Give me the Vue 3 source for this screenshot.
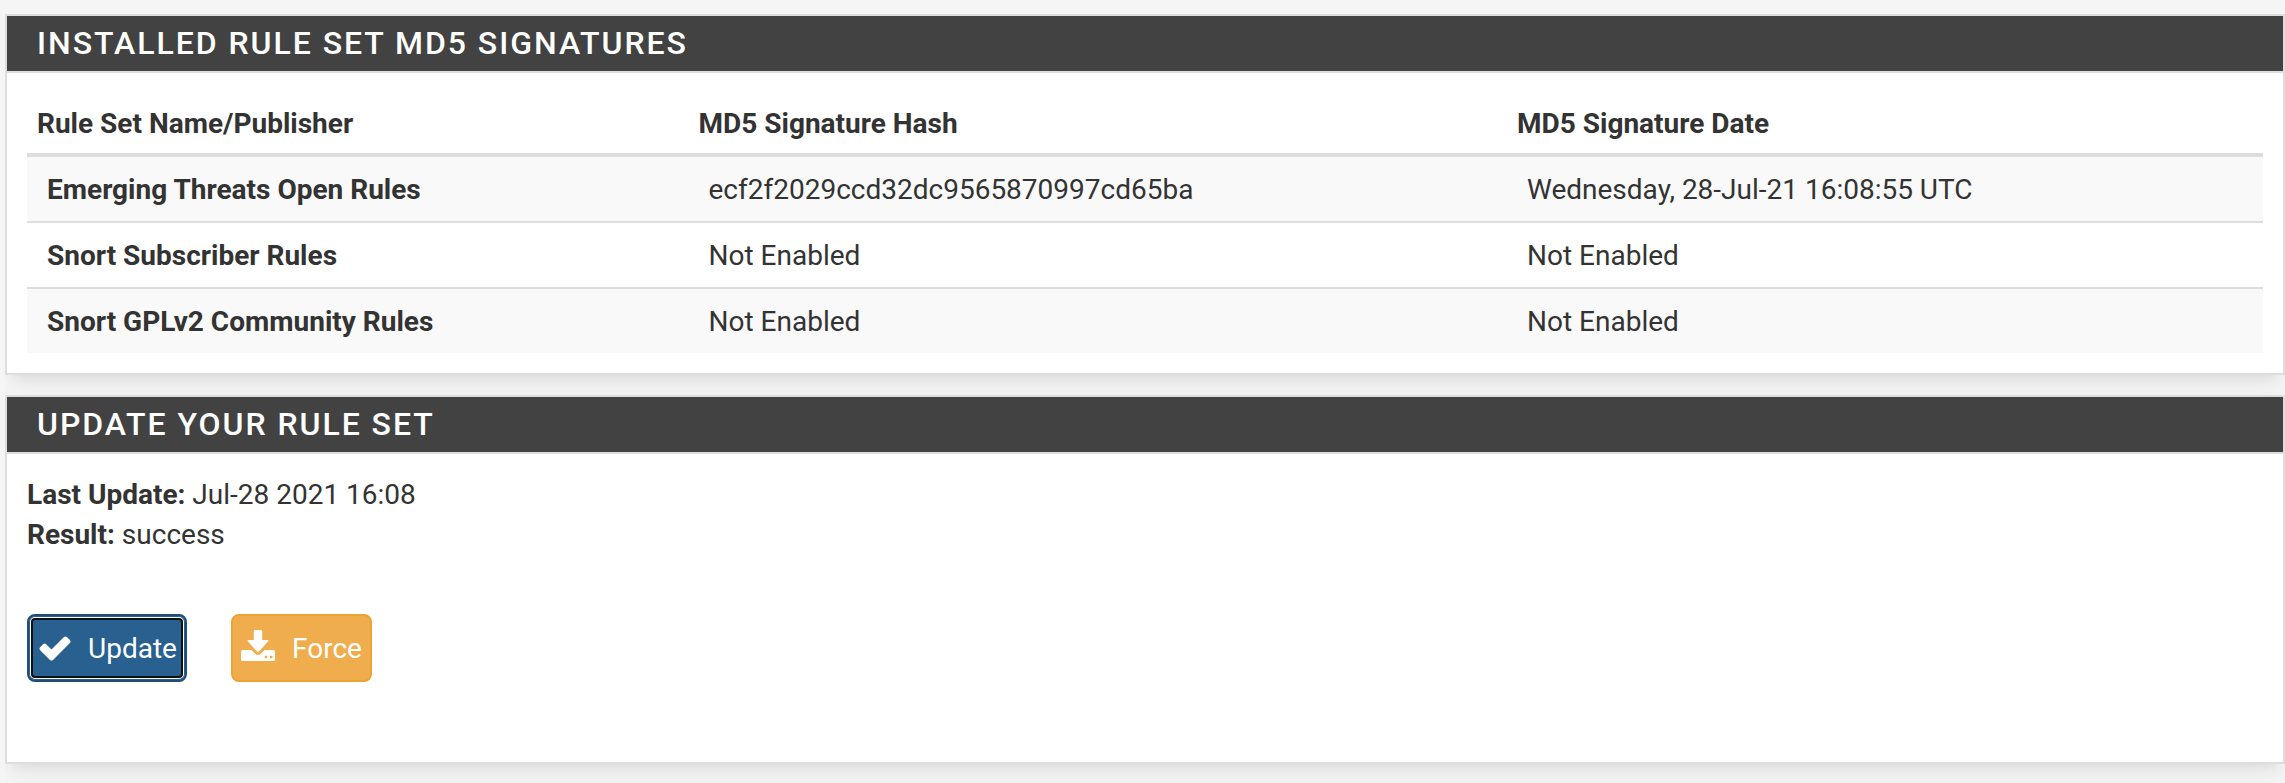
<script setup>
const rows = [
  { name: 'Emerging Threats Open Rules', hash: 'ecf2f2029ccd32dc9565870997cd65ba', date: 'Wednesday, 28-Jul-21 16:08:55 UTC' },
  { name: 'Snort Subscriber Rules', hash: 'Not Enabled', date: 'Not Enabled' },
  { name: 'Snort GPLv2 Community Rules', hash: 'Not Enabled', date: 'Not Enabled' },
]
</script>

<template>
  <main class="page">
    <section class="panel">
      <h2 class="heading">Installed Rule Set MD5 Signatures</h2>
      <div class="body">
        <table class="table">
          <colgroup><col class="c1" /><col class="c2" /><col /></colgroup>
          <thead>
            <tr>
              <th>Rule Set Name/Publisher</th>
              <th>MD5 Signature Hash</th>
              <th>MD5 Signature Date</th>
            </tr>
          </thead>
          <tbody>
            <tr v-for="row in rows" :key="row.name">
              <td><strong>{{ row.name }}</strong></td>
              <td>{{ row.hash }}</td>
              <td>{{ row.date }}</td>
            </tr>
          </tbody>
        </table>
      </div>
    </section>

    <section class="panel update">
      <h2 class="heading">Update Your Rule Set</h2>
      <div class="body">
        <p class="status"><strong>Last Update:</strong> Jul-28 2021 16:08</p>
        <p class="status"><strong>Result:</strong> success</p>
        <div class="actions">
          <button class="btn primary">
            <svg class="check" viewBox="0 0 32 25" width="32" height="25">
              <path d="M31.5 5.6c0 .6-.2 1.100-.6 1.500L14 24c-.4.400-.9.600-1.500.600s-1.100-.2-1.500-.600L1.100 14.200C.7 13.800.5 13.300.5 12.700s.2-1.100.6-1.500l3-3c.4-.4.9-.6 1.500-.6s1.100.2 1.500.6l5.400 5.400L24.900 1.100c.4-.4.9-.6 1.500-.6s1.100.2 1.500.6l3 3c.4.4.6.900.6 1.500z" fill="#fff" />
            </svg>
            <span>Update</span>
          </button>
          <button class="btn warning">
            <svg class="download" viewBox="0 0 34 31" width="34" height="31">
              <path d="M14 0h6q1.200 0 1.200 1.200V10h5.600q1.100.2.4 1.300L18 21.600q-1 .9-2 0L6.800 11.300Q6 10.200 7.200 10h5.600V1.200Q12.800 0 14 0z" fill="#fff" />
              <path fill-rule="evenodd" d="M1.500 20H10.500l4 4q2.500 2 5 0l4-4h9q1.500 0 1.500 1.500v8q0 1.500-1.500 1.500h-31Q0 31 0 29.500v-8Q0 20 1.500 20zM23.700 25.800v2.400h2.500v-2.400zM29 25.800v2.400h2.500v-2.400z" fill="#fff" />
            </svg>
            <span>Force</span>
          </button>
        </div>
      </div>
    </section>
  </main>
</template>

<style>
body { margin: 0; background: #f5f5f5; }
</style>

<style scoped>
.page {
  box-sizing: border-box;
  height: 783px;
  margin-left: 5px;
  padding-top: 14px;
  overflow: hidden;
  color: #333;
  font: 400 28px/40px Roboto, sans-serif;
}
.panel {
  box-sizing: border-box;
  height: 361px;
  margin-bottom: 20px;
  border: 2px solid #ddd;
  background: #fff;
  box-shadow: 0 12px 12px -8px rgba(0, 0, 0, .08), 0 20px 30px rgba(0, 0, 0, .028);
}
.update { height: 369px; }
.heading {
  box-sizing: border-box;
  height: 57px;
  margin: 0;
  padding: 10px 30px;
  border-bottom: 2px solid #ddd;
  background: #424242;
  color: #fff;
  font-size: 32px;
  font-weight: 500;
  line-height: 34px;
  letter-spacing: 1.96px;
  text-transform: uppercase;
}
.body { padding: 20px; }
.update .body { padding-top: 21px; }
.table {
  width: 100%;
  table-layout: fixed;
  border-collapse: separate;
  border-spacing: 0;
}
.c1 { width: 661.5px; }
.c2 { width: 818.5px; }
th {
  padding: 11px 10px 9px;
  border-bottom: 4px solid #ddd;
  font-weight: 700;
  text-align: left;
}
td { padding: 13px 20px 11px; }
tbody tr:nth-child(odd) { background: #f9f9f9; }
tbody tr + tr td { border-top: 2px solid #ddd; }
.status { margin: 0; }
.actions { display: flex; gap: 44px; margin-top: 59px; }
.btn {
  box-sizing: border-box;
  display: flex;
  height: 68px;
  padding: 0 8px;
  border: 2px solid;
  border-radius: 8px;
  align-items: center;
  color: #fff;
  font: inherit;
}
.btn svg { flex: none; }
.btn span { padding-top: 2px; }
.primary {
  width: 160px;
  border-color: #204d74;
  background: #286090;
  box-shadow: inset 0 0 0 1px #286090, inset 0 0 0 2px #fff, inset 0 0 0 4px #101010;
}
.warning { width: 141px; border-color: #eea236; background: #f0ad4e; }
.check { margin: 1px 17px 0 2px; }
.download { margin: -5px 17px 0 0; }
</style>
